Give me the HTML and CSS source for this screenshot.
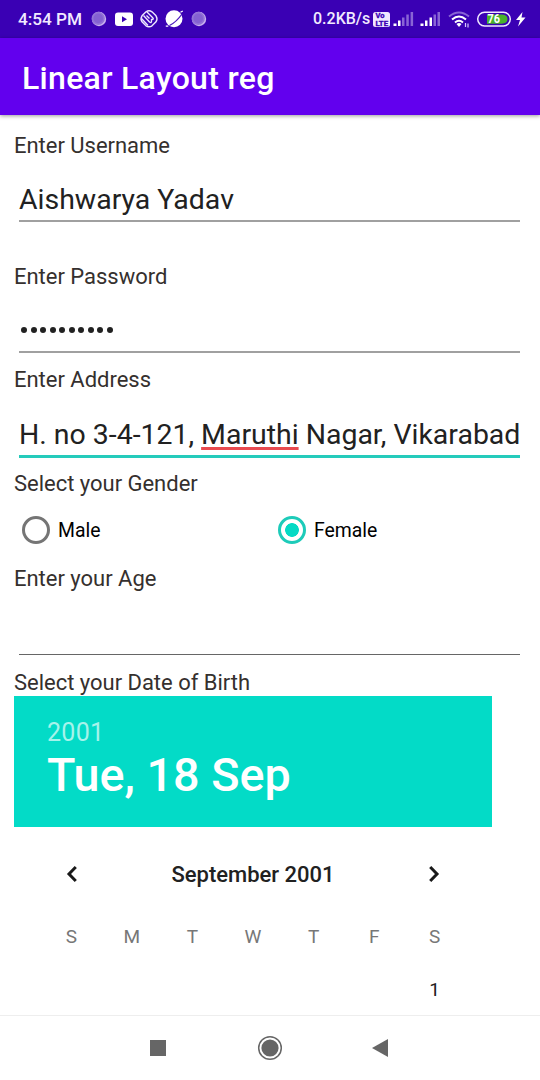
FILE: index.html
```html
<!DOCTYPE html>
<html lang="en">
<head>
<meta charset="utf-8">
<title>Linear Layout reg</title>
<link rel="stylesheet" href="styles.css">
</head>
<body>
<header class="status">
  <span class="clock">4:54 PM</span>
  <svg class="status-left" width="120" height="38" viewBox="88 0 120 38">
    <g id="coin"><circle cx="99" cy="19" r="7.200" fill="#c8b0ee"/><circle cx="98.200" cy="18.400" r="6.600" fill="#9272d6"/><circle cx="98.200" cy="18.400" r="4.800" fill="#8460d2"/></g>
    <use href="#coin" x="100"/>
    <rect x="115" y="12.500" width="18" height="13.500" rx="3" fill="#fff"/>
    <path d="M122 16.200v6l5-3z" fill="#3a00b4"/>
    <g fill="none" stroke="#efe8ff" stroke-width="1.400">
      <path d="M146 11.800q3-2 6 0l4 4q2 3 0 6l-4 4q-3 2-6 0l-4-4q-2-3 0-6z"/>
      <path d="M141.500 18.500l6.500 7M143.500 15.500l6 6.500q2 1.500 2-1v-1.500q3 0 1-2l-5.500-5.500M146.500 15.500l3 3"/>
    </g>
    <circle cx="174" cy="18.800" r="8.500" fill="#fff"/>
    <path d="M165.800 26.200h2.500M180.500 12.300l2.300-1.300" fill="none" stroke="#fff" stroke-width="1.200"/>
    <path d="M169.500 25.500q7-3.500 12.500-11.500" fill="none" stroke="#4b19bc" stroke-width="1.300"/>
  </svg>
  <span class="speed">0.2KB/s</span>
  <svg class="status-right" width="158" height="38" viewBox="372 0 158 38">
    <rect x="373" y="12" width="17" height="15" rx="2.500" fill="#efe8ff"/>
    <g class="volte"><text x="375.500" y="18.300" textLength="9" lengthAdjust="spacingAndGlyphs">Vo</text><text x="375.500" y="26" textLength="12.500" lengthAdjust="spacingAndGlyphs">LTE</text></g>
    <g fill="#fff"><path d="M393.500 23.500h3v2.500h-3zM398 20.500h2.500V26H398z"/><path d="M420.500 23.500h3v2.500h-3zM425 20.500h2.500V26H425zM429.500 17.500h2.500V26h-2.500z"/></g>
    <g fill="#8964d5"><path d="M402 17.500h2.500V26H402zM406.300 14.500h2.500V26h-2.500zM410.600 12h2.500v14h-2.500z"/><path d="M433.500 14.500h2.500V26h-2.500zM437.500 12h2.500v14h-2.500z"/></g>
    <g fill="none" stroke="#fff" stroke-width="2"><path d="M449 16.500q10-8 20 0" stroke="#8964d5"/><path d="M452 19.500q7-6 14 0"/><path d="M455 22.500q4-3.500 8 0"/></g>
    <path d="M456.500 24l2.500 3 2.500-3q-2.500-2-5 0z" fill="#fff"/>
    <path d="M465.500 23v4M468 23.500v4" stroke="#d8c8ff" stroke-width="1.200"/>
    <rect x="477.700" y="12.200" width="32.600" height="13.800" rx="6.900" fill="#3a00b4" stroke="#efe8ff" stroke-width="1.500"/>
    <path d="M487 14.500h14.500q6 0 6 4.600t-6 4.600H487z" fill="#48b22b"/>
    <text class="battery" x="487.500" y="23.300" textLength="12.500" lengthAdjust="spacingAndGlyphs">76</text>
    <path d="M522.500 12l-6.500 8h4l-2 6.500 7.500-9h-4z" fill="#fff"/>
  </svg>
</header>
<div class="appbar"><h1>Linear Layout reg</h1></div>
<main class="form">
  <label class="label">Enter Username</label>
  <div class="field name"><span>Aishwarya Yadav</span></div>
  <label class="label">Enter Password</label>
  <div class="field password"><i></i><i></i><i></i><i></i><i></i><i></i><i></i><i></i><i></i><i></i></div>
  <label class="label label-address">Enter Address</label>
  <div class="field address"><span>H. no 3-4-121, <u>Maruthi</u> Nagar, Vikarabad</span></div>
  <label class="label">Select your Gender</label>
  <div class="radios">
    <div class="option"><span class="radio"></span>Male</div>
    <div class="option"><span class="radio checked"></span>Female</div>
  </div>
  <label class="label">Enter your Age</label>
  <div class="field age"></div>
  <label class="label">Select your Date of Birth</label>
  <section class="picker">
    <div class="picked"><div class="year">2001</div><div class="date">Tue, 18 Sep</div></div>
    <div class="month">
      <svg width="12" height="18" viewBox="0 0 12 18"><path d="M9.800 2L3 9l6.800 7"/></svg>
      <span>September 2001</span>
      <svg width="12" height="18" viewBox="0 0 12 18"><path d="M2.200 2L9 9l-6.800 7"/></svg>
    </div>
    <div class="week days"><span>S</span><span>M</span><span>T</span><span>W</span><span>T</span><span>F</span><span>S</span></div>
    <div class="week first"><span>1</span></div>
  </section>
</main>
<nav class="navbar">
  <svg class="recents" width="16" height="16" viewBox="0 0 16 16"><path d="M0 0h16v16H0z" fill="#666"/></svg>
  <svg width="26" height="26" viewBox="0 0 26 26"><circle cx="13" cy="13" r="11.300" fill="none" stroke="#666" stroke-width="1.500"/><circle cx="13" cy="13" r="8.600" fill="#666"/></svg>
  <svg width="16" height="18" viewBox="0 0 16 18"><path d="M16 0v18L0 9z" fill="#666"/></svg>
</nav>
</body>
</html>
```
FILE: styles.css
```css
* { box-sizing: border-box; }
body { margin: 0; width: 540px; height: 1080px; overflow: hidden; display: flex; flex-direction: column; background: #fff; font-family: Roboto, sans-serif; color: #212121; }
svg { display: block; flex: none; }
.status { height: 38px; flex: none; display: flex; align-items: center; background: #3a00b4; color: #f1eaff; font-size: 17.200px; font-weight: 500; white-space: nowrap; }
.clock { width: 70px; margin-left: 18px; line-height: 40px; }
.speed { width: 59px; margin-left: 105px; font-size: 16px; line-height: 38px; }
.volte { font-size: 6.500px; font-weight: 700; fill: #3a00b4; stroke: #3a00b4; stroke-width: .3px; }
.battery { font-size: 12px; font-weight: 700; fill: #fff; }
.appbar { height: 77px; flex: none; padding: 0 22px; background: #6200ee; color: #fff; box-shadow: 0 1px 4px rgba(0,0,0,.4); }
.appbar h1 { margin: 0; font-size: 32px; line-height: 80px; font-weight: 500; letter-spacing: .3px; white-space: nowrap; }
.form { height: 900px; flex: none; padding: 17px 14px 0; overflow: hidden; }
.label { display: block; height: 26px; line-height: 28px; font-size: 22px; letter-spacing: -.02px; color: #35302e; white-space: nowrap; }
.label-address { line-height: 26px; }
.field { margin: 0 6px 0 5px; border-bottom: 2px solid #a0a0a0; font-size: 28.450px; white-space: nowrap; }
.name { height: 64px; line-height: 84px; margin-bottom: 41px; }
.password { height: 64px; display: flex; gap: 3.500px; padding: 38px 0 0 2px; margin-bottom: 14px; }
.password i { width: 6px; height: 6px; border-radius: 50%; background: #212121; }
.address { height: 65px; line-height: 83px; border-bottom: 3px solid #25cbbb; margin-bottom: 12px; }
.address u { text-decoration: underline #e94b50 3px; text-underline-offset: 3px; text-decoration-skip-ink: none; }
.radios { height: 69px; display: flex; padding-left: 8px; }
.option { width: 256px; flex: none; height: 68px; display: flex; align-items: center; gap: 8px; font-size: 19.400px; color: #000; }
.option:last-child { width: 240px; }
.radio { width: 28px; height: 28px; flex: none; border: 3px solid #757575; border-radius: 50%; }
.checked { border-color: #1dcbb9; background: radial-gradient(circle, #03dac5 6.500px, #fff 7.200px); }
.age { height: 64px; border-bottom: 1px solid #666; margin-bottom: 14px; }
.picker { width: 478px; padding-top: 1px; }
.picked { height: 131px; padding: 21px 33px 0; background: #03dbc7; color: #fff; }
.year { font-size: 25px; line-height: 32px; font-weight: 400; letter-spacing: .3px; color: #a5f3eb; }
.date { font-size: 46.700px; line-height: 52px; font-weight: 500; white-space: nowrap; }
.month { height: 94px; display: flex; align-items: center; justify-content: space-between; padding: 0 52px; font-size: 22px; font-weight: 500; }
.month path { fill: none; stroke: #191919; stroke-width: 3; }
.week { display: grid; grid-template-columns: repeat(7, 1fr); padding: 0 27px; text-align: center; font-size: 19px; }
.days { line-height: 32px; color: #777; }
.first { line-height: 74px; }
.first span { grid-column: 7; }
.navbar { height: 65px; flex: none; display: grid; grid-template-columns: repeat(3, 110px); justify-content: center; align-items: center; justify-items: center; border-top: 1px solid #eee; background: #fff; }
.recents { margin-right: 4px; }
```
